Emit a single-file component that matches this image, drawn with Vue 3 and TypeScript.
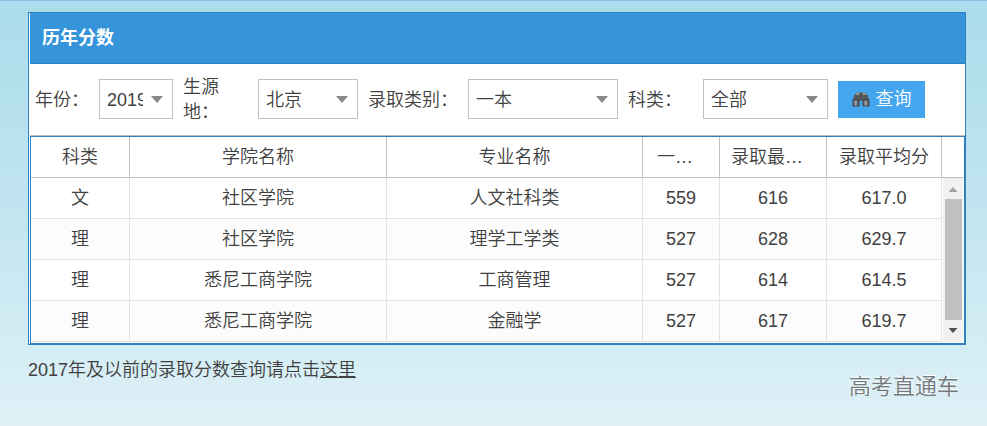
<script setup lang="ts">
import { ref } from 'vue'

interface Filter {
  id: string
  label: string
  value: string
  options: string[]
}

interface ScoreRow {
  category: string
  college: string
  major: string
  line: string
  lowest: string
  average: string
}

const filters = ref<Filter[]>([
  { id: 'year', label: '年份：', value: '2019', options: ['2019', '2018'] },
  { id: 'region', label: '生源地：', value: '北京', options: ['北京'] },
  { id: 'batch', label: '录取类别：', value: '一本', options: ['一本'] },
  { id: 'subject', label: '科类：', value: '全部', options: ['全部', '文', '理'] },
])

const rows: ScoreRow[] = [
  { category: '文', college: '社区学院', major: '人文社科类', line: '559', lowest: '616', average: '617.0' },
  { category: '理', college: '社区学院', major: '理学工学类', line: '527', lowest: '628', average: '629.7' },
  { category: '理', college: '悉尼工商学院', major: '工商管理', line: '527', lowest: '614', average: '614.5' },
  { category: '理', college: '悉尼工商学院', major: '金融学', line: '527', lowest: '617', average: '619.7' },
]
</script>

<template>
  <main class="page">
    <section class="panel">
      <h1 class="panel-title">历年分数</h1>

      <form class="toolbar" @submit.prevent>
        <template v-for="f in filters" :key="f.id">
          <label :for="f.id" :class="['label', f.id]">{{ f.label }}</label>
          <span :class="['combo', f.id]">
            <select :id="f.id" v-model="f.value">
              <option v-for="o in f.options" :key="o">{{ o }}</option>
            </select>
          </span>
        </template>
        <button type="submit" class="search">
          <svg width="18" height="16" viewBox="0 0 18 16" aria-hidden="true">
            <defs>
              <linearGradient id="barrel" x1="0" x2="1" y1="0" y2="0">
                <stop offset="0" stop-color="#4c5055" />
                <stop offset="0.45" stop-color="#a3a7ab" />
                <stop offset="1" stop-color="#3c4045" />
              </linearGradient>
            </defs>
            <path d="M3 3l3-2h2l1 1 1-1h2l3 2 2 4v8h-6v-5H7v5H1V7z" fill="#5f646a" />
            <path d="M4 3l2-2h1v3H4zM11 1h1l3 3h-4z" fill="#9a9ea2" />
            <path d="M8 3h2v6H8z" fill="#4a4e53" />
            <path d="M3 5h4M11 5h4M2 8h5M11 8h5" stroke="#3a3e43" />
            <rect x="1" y="9" width="6" height="6" fill="url(#barrel)" stroke="#43474c" />
            <rect x="11" y="9" width="6" height="6" fill="url(#barrel)" stroke="#43474c" />
          </svg>
          <span>查询</span>
        </button>
      </form>

      <div class="grid">
        <table>
          <colgroup>
            <col class="c-category" />
            <col class="c-college" />
            <col />
            <col class="c-line" />
            <col class="c-lowest" />
            <col class="c-average" />
          </colgroup>
          <thead>
            <tr>
              <th>科类</th>
              <th>学院名称</th>
              <th>专业名称</th>
              <th class="cut">一…</th>
              <th class="cut">录取最…</th>
              <th>录取平均分</th>
            </tr>
          </thead>
          <tbody>
            <tr v-for="(r, i) in rows" :key="i">
              <td>{{ r.category }}</td>
              <td>{{ r.college }}</td>
              <td>{{ r.major }}</td>
              <td>{{ r.line }}</td>
              <td>{{ r.lowest }}</td>
              <td>{{ r.average }}</td>
            </tr>
          </tbody>
        </table>
        <div class="side">
          <div class="side-head"></div>
          <div class="scrollbar">
            <i class="arrow up"></i>
            <i class="thumb"></i>
            <i class="arrow down"></i>
          </div>
        </div>
      </div>
    </section>

    <footer class="foot">
      <p>2017年及以前的录取分数查询请点击<a href="#">这里</a></p>
      <span class="brand">高考直通车</span>
    </footer>
  </main>
</template>

<style>
body {
  margin: 0;
}
</style>

<style scoped>
.page {
  box-sizing: border-box;
  min-height: 100vh;
  padding: 11px 21px 20px 28px;
  border-top: 1px solid #85c0e0;
  background: linear-gradient(#b0dcf3 0, #acdcea 8px, #b9e1ee 32%, #c9e8f2 63%, #dff1f7 100%);
  color: #404040;
  font: 350 18px/25px 'Liberation Sans', 'Noto Sans CJK SC', sans-serif;
}

.panel {
  border: 1px solid #2e80bf;
  background: #fff;
}

.panel-title {
  margin: 0 0 0 1px;
  padding: 13px 12px 12px;
  border-bottom: 1px solid #2e80bf;
  background: #3694db;
  color: #fff;
  font-size: 18px;
  font-weight: 700;
  line-height: 25px;
}

.toolbar {
  display: flex;
  align-items: center;
  gap: 10px;
  height: 70px;
  margin-left: 1px;
  padding: 0 0 1px 5px;
  border-bottom: 1px solid #c0c0c0;
}

.label {
  flex: none;
  padding-top: 2px;
}

.label.year {
  width: 54px;
}

.label.region,
.label.subject {
  width: 65px;
}

.combo {
  position: relative;
  flex: none;
}

.combo.year {
  width: 74px;
}

.combo.region {
  width: 100px;
}

.combo.batch {
  width: 150px;
}

.combo.subject {
  width: 125px;
}

.combo::after {
  content: '';
  position: absolute;
  top: 17px;
  right: 10px;
  border: 6px solid transparent;
  border-top: 7px solid #888;
  border-bottom: 0;
  pointer-events: none;
}

select {
  display: block;
  box-sizing: border-box;
  width: 100%;
  height: 40px;
  margin: 0;
  padding: 2px 29px 0 7px;
  border: 1px solid #c0c0c0;
  border-radius: 0;
  appearance: none;
  background: #fff;
  color: inherit;
  font: inherit;
}

.search {
  display: flex;
  align-items: center;
  justify-content: center;
  gap: 6px;
  width: 87px;
  height: 37px;
  padding: 0;
  border: 0;
  background: #43a6ef;
  color: #fff;
  font: inherit;
}

.grid {
  display: flex;
  margin-left: 1px;
  padding-bottom: 1px;
  border: 1px solid #2e80bf;
}

table {
  flex: 1;
  min-width: 0;
  table-layout: fixed;
  border-collapse: separate;
  border-spacing: 0;
}

.c-category {
  width: 99px;
}

.c-college {
  width: 28.2%;
}

.c-line {
  width: 77px;
}

.c-lowest {
  width: 107px;
}

.c-average {
  width: 115px;
}

th,
td {
  box-sizing: border-box;
  height: 41px;
  padding: 1px 0 0;
  border: solid #e3e3e3;
  border-width: 0 1px 1px 0;
  font-weight: 350;
  text-align: center;
  white-space: nowrap;
}

th {
  border-color: #c0c0c0;
}

th.cut {
  padding-right: 12px;
}

tbody tr:nth-child(even) {
  background: #fcfcfc;
}

.side {
  display: flex;
  flex-direction: column;
  width: 22px;
}

.side-head {
  box-sizing: border-box;
  height: 41px;
  border-bottom: 1px solid #c0c0c0;
}

.scrollbar {
  display: flex;
  flex: 1;
  flex-direction: column;
  align-items: center;
  margin: 0 1px;
  background: #f1f1f1;
}

.arrow {
  flex: none;
  width: 9px;
  height: 5px;
}

.arrow.up {
  margin: 9px 0 7px;
  background: #a3a3a3;
  clip-path: polygon(50% 0, 100% 100%, 0 100%);
}

.arrow.down {
  margin: 8px 0 9px;
  background: #505050;
  clip-path: polygon(0 0, 100% 0, 50% 100%);
}

.thumb {
  flex: 1;
  width: 17px;
  background: #c1c1c1;
}

.foot {
  display: flex;
  justify-content: space-between;
  padding: 13px 7px 0 0;
}

.foot p {
  margin: 0;
}

.foot a {
  color: inherit;
}

.brand {
  padding-top: 16px;
  color: #74797c;
  font-size: 22px;
  text-shadow: 1px -1px #fff;
}
</style>
